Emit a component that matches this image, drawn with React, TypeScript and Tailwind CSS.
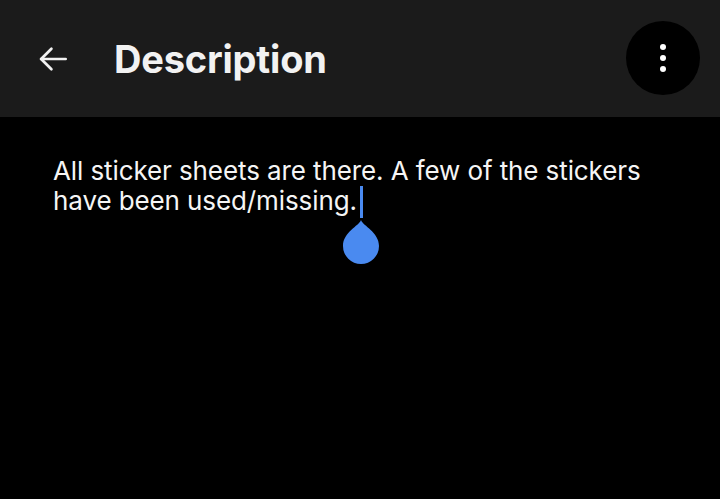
import React from 'react';

const BackArrow = () => (
  <svg width="38" height="38" viewBox="0 0 24 24" fill="none" stroke="#f2f2f2" strokeWidth="1.7" strokeLinecap="round" strokeLinejoin="round">
    <path d="M20 12H4.5" />
    <path d="M11 5.5 4.5 12l6.5 6.5" />
  </svg>
);

const Handle = () => (
  <svg width="40" height="46" viewBox="0 0 40 46">
    <path d="M20 0 C22 6 38 12 38 26 A18 18 0 0 1 2 26 C2 12 18 6 20 0 Z" fill="#4a8af0" />
  </svg>
);

export default function App() {
  return (
    <div className="w-[720px] h-[499px] bg-black flex flex-col" style={{ fontFamily: 'Inter, "Open Sans", sans-serif' }}>
      <header className="h-[117px] bg-[#1b1b1b] flex items-center shrink-0 pl-[34px] pr-[20px]">
        <button className="w-[38px] h-[38px] flex items-center justify-center">
          <BackArrow />
        </button>
        <h1 className="ml-[42px] text-[38px] font-bold text-[#f2f2f2] tracking-[-0.2px] leading-none">Description</h1>
        <div className="flex-1" />
        <button className="w-[74px] h-[74px] rounded-full bg-black flex flex-col items-center justify-center gap-[5px] mt-[-2px]">
          <span className="w-[6px] h-[6px] rounded-full bg-white" />
          <span className="w-[6px] h-[6px] rounded-full bg-white" />
          <span className="w-[6px] h-[6px] rounded-full bg-white" />
        </button>
      </header>
      <main className="flex-1 px-[53px] pt-[39px]">
        <p className="text-[26px] leading-[30px] text-[#f5f5f5] w-[610px] tracking-[-0.1px]">
          All sticker sheets are there. A few of the stickers have been used/missing.<span className="relative inline-block w-[3px] h-[32px] bg-[#4a8af0] align-[-8px] ml-[3px]">
            <span className="absolute left-1/2 top-[34px] -translate-x-1/2">
              <Handle />
            </span>
          </span>
        </p>
      </main>
    </div>
  );
}
